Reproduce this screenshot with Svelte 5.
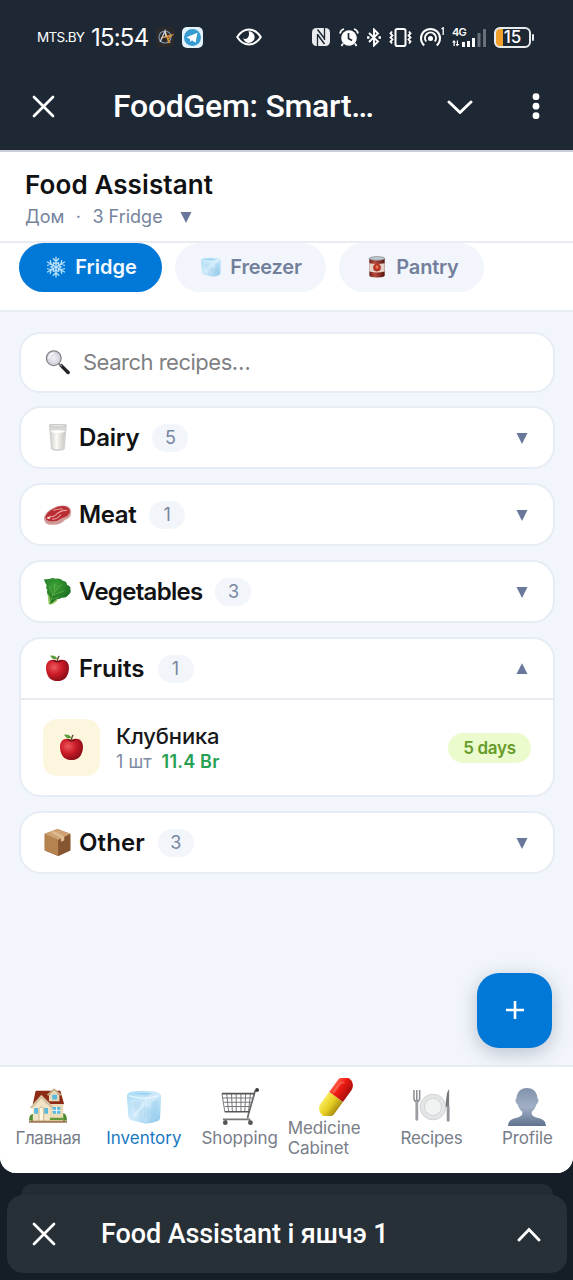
<script lang="ts">
  type Group = { icon: string; name: string; count: number; spacing: number; open?: boolean };

  const tabs = [
    { icon: 'snow', name: 'Fridge' },
    { icon: 'ice', name: 'Freezer' },
    { icon: 'can', name: 'Pantry' },
  ];

  let groups: Group[] = $state([
    { icon: 'milk', name: 'Dairy', count: 5, spacing: -0.2 },
    { icon: 'meat', name: 'Meat', count: 1, spacing: -0.4 },
    { icon: 'greens', name: 'Vegetables', count: 3, spacing: -0.7 },
    { icon: 'apple', name: 'Fruits', count: 1, spacing: 0, open: true },
    { icon: 'box', name: 'Other', count: 3, spacing: 0.1 },
  ]);

  const nav = [
    { icon: 'house', name: 'Главная', spacing: -0.4 },
    { icon: 'ice', name: 'Inventory', spacing: 0 },
    { icon: 'cart', name: 'Shopping', spacing: 0 },
    { icon: 'pill', name: 'Medicine Cabinet', spacing: -0.1 },
    { icon: 'plate', name: 'Recipes', spacing: -0.25 },
    { icon: 'person', name: 'Profile', spacing: -0.15 },
  ];

  let activeTab = $state('Fridge');
  let activeNav = $state('Inventory');
</script>

<!-- shared gradients for the icons -->
<svg class="defs" width="0" height="0" aria-hidden="true">
  <defs>
    <radialGradient id="gApple" cx=".35" cy=".35" r=".75">
      <stop offset="0" stop-color="#ee5a60" />
      <stop offset=".45" stop-color="#cc1c28" />
      <stop offset="1" stop-color="#7e0a12" />
    </radialGradient>
    <linearGradient id="gIce" x1="0" y1="0" x2="1" y2="1">
      <stop offset="0" stop-color="#a9dbf5" />
      <stop offset=".5" stop-color="#cfeafa" />
      <stop offset="1" stop-color="#8ac6ea" />
    </linearGradient>
    <linearGradient id="gCan">
      <stop offset="0" stop-color="#6e231d" />
      <stop offset=".35" stop-color="#b8493c" />
      <stop offset="1" stop-color="#561410" />
    </linearGradient>
    <linearGradient id="gMilk">
      <stop offset="0" stop-color="#d3d1cd" />
      <stop offset=".4" stop-color="#fbfaf7" />
      <stop offset="1" stop-color="#c9c6c1" />
    </linearGradient>
    <linearGradient id="gPerson" x1="0" y1="0" x2="0" y2="1">
      <stop offset="0" stop-color="#8292ab" />
      <stop offset=".5" stop-color="#a0afc5" />
      <stop offset="1" stop-color="#60728e" />
    </linearGradient>
    <linearGradient id="gRed" x1="0" y1="0" x2="1" y2="0">
      <stop offset="0" stop-color="#ff5a45" />
      <stop offset=".4" stop-color="#ee1a12" />
      <stop offset="1" stop-color="#a80f0c" />
    </linearGradient>
    <linearGradient id="gYellow" x1="0" y1="0" x2="1" y2="0">
      <stop offset="0" stop-color="#f8ea5a" />
      <stop offset=".5" stop-color="#e6cf22" />
      <stop offset="1" stop-color="#a98e12" />
    </linearGradient>
    <radialGradient id="gLens">
      <stop offset="0" stop-color="#f4f2f8" />
      <stop offset="1" stop-color="#cfccd8" />
    </radialGradient>
    <radialGradient id="gLeaf" cx=".4" cy=".3" r=".8">
      <stop offset="0" stop-color="#3da336" />
      <stop offset="1" stop-color="#11601a" />
    </radialGradient>
  </defs>
</svg>

{#snippet icon(name: string, size: number)}
  <svg class="icon" width={size} height={size} viewBox="0 0 40 40" fill="none">
    {#if name === 'snow'}
      <g stroke="#b9e3fb" stroke-width="2.3" stroke-linecap="round">
        {#each [0, 60, 120, 180, 240, 300] as a}
          <path d="M20 20V2M20 10l-5-5M20 10l5-5M20 15l-4-3M20 15l4-3" transform="rotate({a} 20 20)" />
        {/each}
      </g>
    {:else if name === 'ice'}
      <path d="M4 5Q9 3 20 3t15 2q3 1 3 4l-1 22q0 3-3 4-7 3-14 2L7 34q-3-1-3.500-4L2 9q0-3 2-4z" fill="url(#gIce)" />
      <path d="M4 8q10 3 18 3l14-3" stroke="#eef9ff" stroke-width="1.500" opacity=".8" />
      <path d="M22 12v24" stroke="#eef9ff" stroke-width="1.500" opacity=".4" />
      <path d="M7 12l13 3v17L9 30z" fill="#e4f4fd" opacity=".45" />
      <path d="M8 15q6-3 10 1-2 6-8 9zM13 30q2-8 8-11l7 5q-4 8-10 9z" fill="#a6d3f0" opacity=".45" />
      <path d="M28 15l7-3-2 17-6 3z" fill="#8cc8ec" opacity=".35" />
      <path d="M9 6q11-2 20 0l-7 2z" fill="#7cc5ed" opacity=".5" />
    {:else if name === 'can'}
      <path d="M6 4v31q0 4 14 4t14-4V4z" fill="url(#gCan)" />
      <ellipse cx="20" cy="4.500" rx="14" ry="3.500" fill="#bfc6cb" stroke="#747b80" />
      <path d="M6 13q14 3 28 0v15q-14 4-28 0z" fill="#e4d2c8" />
      <circle cx="20" cy="21" r="7" fill="#b63022" />
      <circle cx="20" cy="20" r="3" fill="#e87561" />
    {:else if name === 'search'}
      <path d="M26 25l11 11" stroke="#222429" stroke-width="5.500" stroke-linecap="round" />
      <path d="M22 22l5 4" stroke="#777" stroke-width="3" />
      <circle cx="14" cy="13" r="11.800" fill="url(#gLens)" stroke="#85848b" stroke-width="2" />
      <path d="M6 13q2-7 8-8" stroke="#fff" stroke-width="2" stroke-linecap="round" />
    {:else if name === 'milk'}
      <path d="M8 1h25l-3 36q-1 2-9.500 2t-9.500-2z" fill="#d9d9d8" stroke="#c4c4c2" />
      <path d="M10 11h21l-2.500 24q-1 2-8 2t-8-2z" fill="url(#gMilk)" />
      <ellipse cx="20.500" cy="11" rx="10.500" ry="2" fill="#fffefa" />
      <ellipse cx="20.500" cy="2.500" rx="12.500" ry="2" fill="#e4e4e4" stroke="#c0c0be" />
    {:else if name === 'meat'}
      <path d="M0 27q0-8 9-14Q20 5 33 7q8 2 7 11 0 7-9 10-6 7-16 7-13 2-15-8z" fill="#d09a96" />
      <path d="M2 24q3-8 10-11 10-7 20-5 7 2 6 9-2 6-11 8-7 5-14 5-10 1-11-6z" fill="#b92c33" />
      <path d="M8 22q4 3 9-1 8-8 17-7M14 14q7-3 14-2M12 27q8 0 13-7" stroke="#efa6a2" stroke-width="1.500" />
      <ellipse cx="7" cy="25" rx="2.500" ry="1.600" fill="#f5dcd6" />
    {:else if name === 'greens'}
      <path d="M7 39L5 22q12-13 20-12 2 10-6 24-6 6-12 5z" fill="#8fc45b" />
      <path d="M0 2q6 0 9-1 4-2 8 0 7-1 11 3 6 1 6 6 6 2 5 7 2 5-3 8-3 5-9 4-5 3-8 2l-10 8q2-10-2-14-4-3-2-7-3-4-1-7-3-4-4-9z" fill="url(#gLeaf)" />
      <path d="M9 37Q13 20 26 9M13 26L8 11M15 22l1-14M14 25l16-6M11 32l12-4" stroke="#7dbf58" stroke-width="1.200" opacity=".65" />
    {:else if name === 'apple'}
      <path d="M20 9C10 4 3 10 3 19c0 10 5 18 12 19q5 1 10 0c7-1 12-9 12-19C37 10 30 4 20 9z" fill="url(#gApple)" />
      <path d="M14 8q6 4 12 0" stroke="#6f0b10" stroke-width="2" />
      <path d="M20 9q0-4 2-7" stroke="#604224" stroke-width="2" stroke-linecap="round" />
      <path d="M20 6q-7 2-11-5 8-1 11 5z" fill="#599c38" />
    {:else if name === 'box'}
      <path d="M20 0L39 7v25L21 40 1 32V7z" fill="#a67547" />
      <path d="M1 7l20 9v24L1 32z" fill="#b5834f" />
      <path d="M39 7l-18 9v24l18-8z" fill="#855631" />
      <path d="M20 0l19 7-18 9L1 7z" fill="#cfa273" />
      <path d="M14 3l16 8v6l-5 2v-5.500L10 4.500z" fill="#dcbc93" />
    {:else if name === 'house'}
      <path d="M0 34q0-7 5-7v8zM40 34q0-7-5-8v9z" fill="#4f8d32" />
      <path d="M7 3h26l4 14H4z" fill="#8c2c17" />
      <path d="M19 17h17v18H19z" fill="#eedcb8" />
      <path d="M4 20l9-10 9 10v15H4z" fill="#f1e3c5" />
      <path d="M2 21L13 9l12 12" stroke="#d3bf9f" stroke-width="2.500" />
      <path d="M21 8l5.500-7L32 8v6H21z" fill="#ead9b8" />
      <path d="M19.500 7.500l7-6 7 6" stroke="#c4ac88" stroke-width="1.800" />
      <path d="M24.500 7h5v5h-5zM25 20h8v7h-8zM5.500 21h4v6h-4zM16 21h4v6h-4z" fill="#58b9dc" />
      <path d="M10.500 22q2.500-4 5 0v13h-5z" fill="#fff6dd" stroke="#c5b08c" />
      <path d="M29 20v7M25 23.500h8" stroke="#fff" />
      <path d="M0 35.500h40" stroke="#a37a52" stroke-width="2" />
      <path d="M22 32.500h14" stroke="#639b3b" stroke-width="2.500" />
    {:else if name === 'cart'}
      <path d="M39 2l-3 1-7 24-1 5" stroke="#67686b" stroke-width="1.800" stroke-linejoin="round" />
      <path d="M2 10.500h31M3 15h29M4 19.500h27M1 6l3 19M6 6l2 19M11 6l1 19M16 6v19M21 6v19M26 6l-1 19M31 6l-2 19" stroke="#707175" stroke-width="1" />
      <path d="M1 6h34M4 25h26" stroke="#55565a" stroke-width="1.800" />
      <path d="M2 33h27M5 33v3M30 32v4" stroke="#77787c" stroke-width="1.800" />
      <circle cx="4.500" cy="36.500" r="2.500" fill="#555" /><circle cx="31" cy="36.500" r="2.500" fill="#555" />
      <circle cx="38" cy="2" r="2" fill="#3b3535" />
    {:else if name === 'pill'}
      <g transform="rotate(36 20 20)">
        <path d="M11 20V5a9 9 0 0 1 18 0v15z" fill="url(#gRed)" />
        <path d="M11 20v15a9 9 0 0 0 18 0V20z" fill="url(#gYellow)" />
        <path d="M15 17V7q0-3 3-4" stroke="#ffb8a8" stroke-width="2" stroke-linecap="round" opacity=".3" />
      </g>
    {:else if name === 'plate'}
      <circle cx="21" cy="20" r="13.500" fill="#e3e5e6" stroke="#cdd0d1" />
      <circle cx="21" cy="20" r="9" fill="#f1f2f2" stroke="#d0d3d4" />
      <path d="M1 2v9q0 3 3 3t3-3V2M4 2v12" stroke="#8d8f94" stroke-width="1.600" />
      <path d="M4 15v18" stroke="#9c9ea3" stroke-width="3" stroke-linecap="round" />
      <path d="M38 1q-3.500 4-3.500 19H38z" fill="#77797e" />
      <path d="M37 20v14" stroke="#92949a" stroke-width="3" stroke-linecap="round" />
    {:else if name === 'person'}
      <path d="M20 0c7 0 11 5 11 11 2 0 1 5-1 6-1 4-3 6-5 8v3q2 3 9 4 6 2 6 8H0q0-6 6-8 7-1 9-4v-3c-2-2-4-4-5-8-2-1-3-6-1-6C9 5 13 0 20 0z" fill="url(#gPerson)" />
    {/if}
  </svg>
{/snippet}

{#snippet arrow(up: boolean)}
  <svg class="arrow" width="12" height="12" viewBox="0 0 12 12">
    <path d={up ? 'M6 .2L11.500 11H.5z' : 'M.5 1h11L6 12z'} fill="#69789a" />
  </svg>
{/snippet}

<div class="phone">
  <div class="status-bar">
    <span class="carrier">MTS.BY</span>
    <span class="clock">15:54</span>
    <svg class="app-badge" width="18" height="20" viewBox="0 0 18 20" fill="none">
      <rect width="18" height="20" rx="4" fill="#2b2929" />
      <circle cx="9" cy="10" r="6" stroke="#7d94ad" stroke-width="1.200" />
      <path d="M9 4l4 12M5 11l11-3-4 4 2 4" stroke="#d8923b" stroke-width="1.400" />
      <path d="M4 15L9 4l1 6" stroke="#c6d3df" stroke-width="1.300" />
    </svg>
    <svg class="tg-badge" width="21" height="21" viewBox="0 0 21 21">
      <rect width="21" height="21" rx="5" fill="#e4f3fa" />
      <circle cx="10.500" cy="10.500" r="8.500" fill="#369bd0" />
      <path d="M4.500 10.300l11-4.500-2 10-3.500-2.500-1.700 1.700-.3-3z" fill="#fff" />
    </svg>
    <svg class="eye" width="26" height="18" viewBox="0 0 26 18" fill="none">
      <path d="M1.200 9Q6 1.500 13 1.500T24.800 9Q20 16.500 13 16.500T1.200 9z" stroke="#fff" stroke-width="2" />
      <path d="M12.500 3.300a5.800 5.800 0 1 1-5.300 7q2.500 1.500 4.300-.3 2.500-2.500 1-6.700z" fill="#fff" />
    </svg>
    <div class="status-icons">
      <svg width="18" height="18" viewBox="0 0 18 18" fill="none">
        <rect width="18" height="18" rx="4.500" fill="#e9ebed" />
        <path d="M4.500 0v0M5.500 18V6M12.500 0v12" stroke="#1e2834" stroke-width="1.300" />
        <path d="M5.500 1.500l7 9M5.500 6.500l7 9.500" stroke="#1e2834" stroke-width="1.500" />
      </svg>
      <svg width="20" height="19" viewBox="0 0 20 19" fill="none">
        <circle cx="10" cy="10" r="7.800" fill="#fff" />
        <path d="M9.500 5v5.500l3.500 2" stroke="#1e2834" stroke-width="1.700" />
        <path d="M1 5.500Q1.500 2 5 1M19 5.500Q18.500 2 15 1M4 15.500L2.500 18M16 15.500l1.500 2.500" stroke="#fff" stroke-width="1.800" />
      </svg>
      <svg width="14" height="19" viewBox="0 0 14 19" fill="none" stroke="#fff" stroke-width="1.900">
        <path d="M2 5l9 8.500-4 4V1.500l4 4L2 14" />
        <path d="M0 9.500h2.500M11.500 9.500H14" stroke-width="2.500" />
      </svg>
      <svg width="23" height="19" viewBox="0 0 23 19" fill="none" stroke="#fff">
        <rect x="6.500" y="1" width="10" height="17" rx="1.800" stroke-width="2" />
        <path d="M3 3.500L1.500 5.500l2 2-2 2 2 2-2 2 1.500 2M20 3.500l1.500 2-2 2 2 2-2 2 2 2-1.500 2" stroke-width="1.800" />
      </svg>
      <svg class="hotspot" width="26" height="20" viewBox="0 0 26 20" fill="none" stroke="#fff" stroke-width="2">
        <path d="M5.200 18.500a9.500 9.500 0 1 1 12.600 0M7.200 14.500a5.500 5.500 0 1 1 8.600 0" />
        <circle cx="11.500" cy="11.500" r="2.500" fill="#fff" stroke="none" />
        <path d="M22.500 2l1.700-1.300V8" stroke-width="1.300" />
      </svg>
      <div class="cell">
        <span>4G</span>
        <svg width="34" height="19" viewBox="0 0 34 19" fill="#fff">
          <path d="M2 12l2 2.500H2.800V18H1.500v-3.500H0zM5 18.500L3.800 16h1v-3.500H6V16h1.500zM10 14h3v5h-3zM15 13h3v6h-3zM20 10h3v9h-3z" />
          <path d="M25.500 5h3v14h-3zM31 1h3v18h-3z" fill="#68707a" />
        </svg>
      </div>
      <div class="battery"><span>15</span></div>
    </div>
  </div>

  <div class="title-bar">
    <svg width="23" height="23" viewBox="0 0 23 23" stroke="#fff" stroke-width="2.700" stroke-linecap="round">
      <path d="M2 2l19 19M21 2L2 21" />
    </svg>
    <h1>FoodGem: Smart…</h1>
    <svg class="chevron" width="26" height="16" viewBox="0 0 26 16" fill="none" stroke="#fff" stroke-width="2.900" stroke-linecap="round">
      <path d="M2 4l11 10.500L24 4" />
    </svg>
    <svg class="dots" width="8" height="28" viewBox="0 0 8 28" fill="#fff">
      <circle cx="4" cy="4.700" r="3.400" /><circle cx="4" cy="14.200" r="3.400" /><circle cx="4" cy="23.700" r="3.400" />
    </svg>
  </div>

  <main class="app">
    <header>
      <h2>Food Assistant</h2>
      <div class="place">
        <span>Дом</span><span class="sep">·</span><span>3 Fridge</span>
        {@render arrow(false)}
      </div>
    </header>

    <div class="tabs">
      {#each tabs as tab}
        <button class="tab" class:active={activeTab === tab.name} onclick={() => (activeTab = tab.name)}>
          {@render icon(tab.icon, 22)}
          <span>{tab.name}</span>
        </button>
      {/each}
    </div>

    <div class="content">
      <div class="search">
        {@render icon('search', 25)}
        <span>Search recipes…</span>
      </div>

      {#each groups as group}
        <section class="group">
          <button class="group-head" onclick={() => (group.open = !group.open)}>
            {@render icon(group.icon, 27)}
            <span class="group-name" style="letter-spacing: {group.spacing}px">{group.name}</span>
            <span class="pill">{group.count}</span>
            {@render arrow(!!group.open)}
          </button>
          {#if group.open}
            <div class="item">
              <div class="thumb">{@render icon('apple', 27)}</div>
              <div class="item-text">
                <div class="item-name">Клубника</div>
                <div class="item-meta"><span>1 шт</span><b>11.4 Br</b></div>
              </div>
              <span class="days">5 days</span>
            </div>
          {/if}
        </section>
      {/each}

      <button class="fab" aria-label="Add">
        <svg width="20" height="20" viewBox="0 0 20 20" stroke="#fff" stroke-width="2.600">
          <path d="M10 1v18M1 10h18" />
        </svg>
      </button>
    </div>

    <nav>
      {#each nav as entry}
        <button class="nav-item" class:active={activeNav === entry.name} onclick={() => (activeNav = entry.name)}>
          {@render icon(entry.icon, 38)}
          <span style="letter-spacing: {entry.spacing}px">{entry.name}</span>
        </button>
      {/each}
    </nav>
  </main>

  <footer>
    <div class="sheet-back"></div>
    <div class="sheet">
      <svg width="24" height="24" viewBox="0 0 24 24" stroke="#fff" stroke-width="2.700" stroke-linecap="round">
        <path d="M2 2l20 20M22 2L2 22" />
      </svg>
      <strong>Food Assistant і яшчэ 1</strong>
      <svg width="24" height="15" viewBox="0 0 24 15" fill="none" stroke="#fff" stroke-width="2.900" stroke-linecap="round">
        <path d="M2 13L12 2.500 22 13" />
      </svg>
    </div>
  </footer>
</div>

<style>
  :global(body) {
    margin: 0;
    background: #151e27;
  }

  .phone {
    width: 573px;
    height: 1280px;
    overflow: hidden;
    display: flex;
    flex-direction: column;
    background: #151e27;
    font-family: Inter, 'Noto Sans', sans-serif;
  }

  .phone * {
    box-sizing: border-box;
  }

  .defs {
    position: absolute;
  }

  svg {
    flex-shrink: 0;
    display: block;
  }

  button {
    border: none;
    background: none;
    padding: 0;
    font: inherit;
    color: inherit;
    cursor: pointer;
  }

  .status-bar {
    height: 74px;
    flex-shrink: 0;
    display: flex;
    align-items: center;
    padding: 0 42px 0 37px;
    background: #1e2834;
    color: #fff;
    white-space: nowrap;
  }

  .carrier {
    width: 54px;
    font-size: 13.5px;
    letter-spacing: -0.7px;
  }

  .clock {
    width: 65px;
    font-size: 24px;
    letter-spacing: -0.8px;
  }

  .tg-badge {
    margin-left: 8px;
  }

  .eye {
    margin-left: 33px;
  }

  .status-icons {
    margin-left: auto;
    display: flex;
    align-items: center;
    gap: 8px;
  }

  .status-icons svg:first-child {
    margin-right: 1px;
  }

  .hotspot {
    margin-right: -1px;
    margin-left: -1px;
  }

  .cell {
    position: relative;
  }

  .cell span {
    position: absolute;
    left: 0;
    top: -1px;
    font-size: 11px;
    line-height: 11px;
    font-weight: 600;
    letter-spacing: -0.8px;
  }

  .battery {
    position: relative;
    width: 37px;
    height: 21px;
    border: 2px solid #e8ebee;
    border-radius: 6px;
    background: linear-gradient(to right, #f2a02c 7px, transparent 7px);
    font-size: 17px;
    line-height: 17px;
    font-weight: 500;
    text-align: center;
  }

  .battery::after {
    content: '';
    position: absolute;
    right: -5px;
    top: 5px;
    width: 2px;
    height: 7px;
    border-radius: 1px;
    background: #e8ebee;
  }

  .title-bar {
    height: 76px;
    flex-shrink: 0;
    display: flex;
    align-items: center;
    padding: 0 33px 12px 32px;
    background: #1e2834;
  }

  h1 {
    margin: 0 0 0 58px;
    width: 334px;
    color: #fff;
    font-family: Roboto, sans-serif;
    font-size: 32px;
    font-weight: 500;
    line-height: 40px;
    letter-spacing: -0.27px;
    white-space: nowrap;
  }

  .dots {
    margin-left: auto;
  }

  .app {
    height: 1023px;
    flex-shrink: 0;
    display: flex;
    flex-direction: column;
    background: #f2f6fc;
    border-radius: 0 0 16px 16px;
    overflow: hidden;
  }

  header {
    height: 93px;
    padding: 19px 25px 0;
    background: #fff;
    border-top: 2px solid #c9ced8;
    border-bottom: 2px solid #e9edf3;
  }

  h2 {
    margin: 0;
    color: #101113;
    font-size: 26px;
    font-weight: 600;
    line-height: 28px;
    letter-spacing: 0.1px;
  }

  .place {
    display: flex;
    align-items: center;
    margin-top: 5px;
    color: #75839d;
    font-size: 18px;
    line-height: 26px;
  }

  .sep {
    width: 28px;
    text-align: center;
  }

  .place .arrow {
    margin-left: 17px;
  }

  .tabs {
    height: 69px;
    display: flex;
    gap: 13px;
    padding: 0 19px;
    background: #fff;
    border-bottom: 2px solid #e7ecf3;
  }

  .tab {
    width: 151px;
    height: 49px;
    display: flex;
    align-items: center;
    justify-content: center;
    gap: 8px;
    padding: 0 0 1px 1px;
    border-radius: 25px;
    background: #f2f6fc;
    color: #72809b;
    font-size: 20px;
    font-weight: 600;
    letter-spacing: -0.2px;
  }

  .tab:first-child {
    width: 143px;
    letter-spacing: 0;
  }

  .tab:last-child {
    width: 145px;
    padding-left: 2px;
  }

  .tab.active {
    background: #0078d8;
    color: #f4faff;
  }

  .content {
    position: relative;
    height: 753px;
    display: flex;
    flex-direction: column;
    gap: 14px;
    padding: 20px 18px 0 19px;
  }

  .search {
    height: 61px;
    display: flex;
    align-items: center;
    gap: 13px;
    padding: 0 24px 1px;
    margin-bottom: -1px;
    background: #fff;
    border: 2px solid #e6ecf4;
    border-radius: 21px;
    color: #7f8082;
    font-size: 22px;
    letter-spacing: -0.5px;
  }

  .group {
    background: #fff;
    border: 2px solid #e6ecf4;
    border-radius: 22px;
  }

  .group-head {
    width: 100%;
    height: 59px;
    display: flex;
    align-items: center;
    padding: 0 25px 0 23px;
  }

  .group-name {
    margin: 0 13px 0 8px;
    color: #111214;
    font-size: 24px;
    font-weight: 600;
  }

  .pill {
    width: 36px;
    height: 28px;
    border-radius: 14px;
    background: #f2f6fb;
    color: #78869e;
    font-size: 18px;
    line-height: 28px;
    text-align: center;
  }

  .group-head .arrow {
    margin-left: auto;
  }

  .item {
    height: 97px;
    display: flex;
    align-items: center;
    padding: 0 22px 0 22px;
    border-top: 2px solid #e8ecf1;
  }

  .thumb {
    width: 57px;
    height: 57px;
    display: flex;
    align-items: center;
    justify-content: center;
    border-radius: 14px;
    background: #fdf6df;
  }

  .item-text {
    margin-left: 16px;
    padding-top: 2px;
  }

  .item-name {
    color: #17181a;
    font-size: 22px;
    font-weight: 500;
    line-height: 27px;
    letter-spacing: -0.15px;
  }

  .item-meta {
    display: flex;
    gap: 10px;
    color: #7e8aa1;
    font-size: 18px;
    line-height: 24px;
  }

  .item-meta b {
    color: #26a053;
    font-weight: 600;
    letter-spacing: 0.2px;
  }

  .days {
    width: 83px;
    height: 30px;
    margin-left: auto;
    border-radius: 15px;
    background: #ebfbcd;
    color: #669b29;
    font-size: 17px;
    font-weight: 600;
    line-height: 30px;
    letter-spacing: -0.3px;
    text-align: center;
  }

  .fab {
    position: absolute;
    right: 21px;
    bottom: 17px;
    width: 75px;
    height: 75px;
    display: flex;
    align-items: center;
    justify-content: center;
    padding-bottom: 2px;
    border-radius: 22px;
    background: #0078d8;
    box-shadow: 0 5px 20px rgba(20, 35, 60, 0.25);
  }

  nav {
    position: relative;
    height: 108px;
    display: flex;
    background: #fff;
    border-top: 2px solid #e8ecf2;
  }

  .nav-item {
    width: 95.9px;
    flex-shrink: 0;
    height: 102px;
    display: flex;
    flex-direction: column;
    align-items: center;
    justify-content: center;
    gap: 2px;
    color: #787d88;
    font-size: 17px;
    font-weight: 400;
    line-height: 20px;
    text-align: left;
  }

  .nav-item.active {
    color: #1878c3;
  }

  footer {
    height: 107px;
    padding: 11px 6px 7px 7px;
  }

  .sheet-back {
    height: 11px;
    margin: 0 14px;
    border-radius: 14px 14px 0 0;
    background: #232b33;
  }

  .sheet {
    height: 78px;
    display: flex;
    align-items: center;
    padding: 0 26px 0 25px;
    border-radius: 16px;
    background: #272f37;
  }

  .sheet strong {
    flex: 1;
    margin-left: 45px;
    color: #fff;
    font-family: Roboto, sans-serif;
    font-size: 27px;
    font-weight: 500;
    letter-spacing: -0.1px;
    white-space: nowrap;
  }
</style>
